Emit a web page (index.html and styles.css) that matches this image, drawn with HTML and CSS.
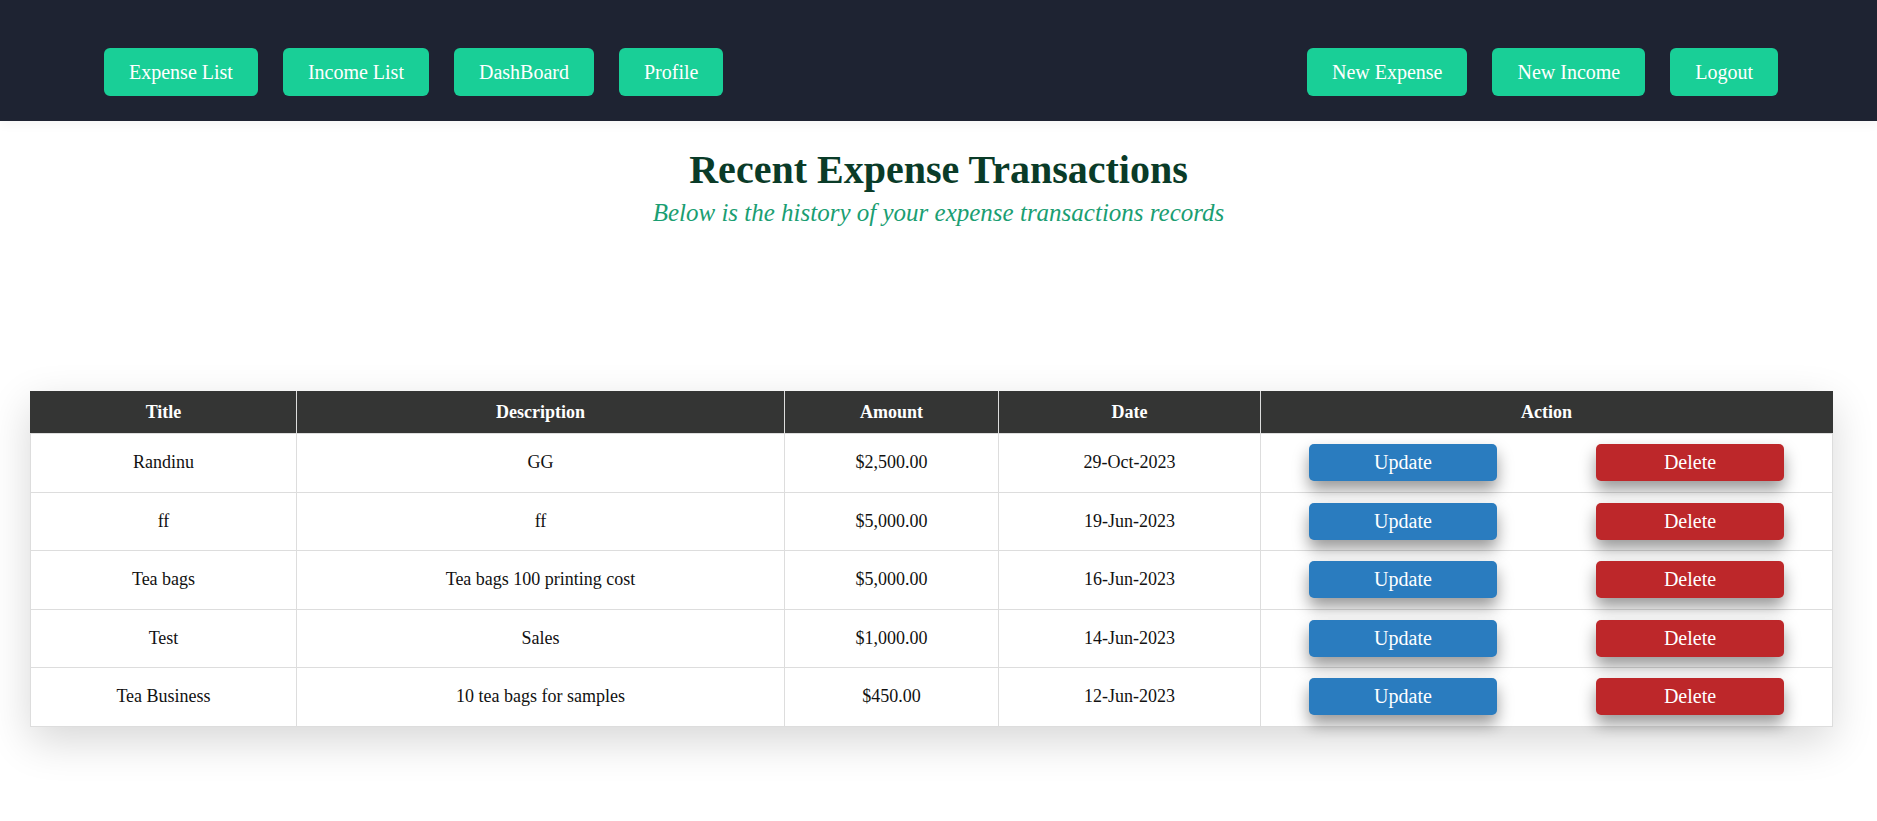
FILE: index.html
```html
<!DOCTYPE html>
<html>
<head>
<meta charset="utf-8">
<link rel="stylesheet" href="styles.css">
</head>
<body>
<nav class="nav">
  <div class="nav-group">
    <a class="nav-btn">Expense List</a>
    <a class="nav-btn">Income List</a>
    <a class="nav-btn">DashBoard</a>
    <a class="nav-btn">Profile</a>
  </div>
  <div class="nav-group">
    <a class="nav-btn">New Expense</a>
    <a class="nav-btn">New Income</a>
    <a class="nav-btn">Logout</a>
  </div>
</nav>
<header class="page-head">
  <h1 class="title">Recent Expense Transactions</h1>
  <p class="subtitle">Below is the history of your expense transactions records</p>
</header>
<section class="table-wrap">
  <table class="tx-table">
    <colgroup>
      <col class="c-title"><col class="c-desc"><col class="c-amount"><col class="c-date"><col class="c-action">
    </colgroup>
    <thead>
      <tr><th>Title</th><th>Description</th><th>Amount</th><th>Date</th><th>Action</th></tr>
    </thead>
    <tbody>
      <tr><td>Randinu</td><td>GG</td><td>$2,500.00</td><td>29-Oct-2023</td><td><div class="actions"><button class="btn btn-update">Update</button><button class="btn btn-delete">Delete</button></div></td></tr>
      <tr><td>ff</td><td>ff</td><td>$5,000.00</td><td>19-Jun-2023</td><td><div class="actions"><button class="btn btn-update">Update</button><button class="btn btn-delete">Delete</button></div></td></tr>
      <tr><td>Tea bags</td><td>Tea bags 100 printing cost</td><td>$5,000.00</td><td>16-Jun-2023</td><td><div class="actions"><button class="btn btn-update">Update</button><button class="btn btn-delete">Delete</button></div></td></tr>
      <tr><td>Test</td><td>Sales</td><td>$1,000.00</td><td>14-Jun-2023</td><td><div class="actions"><button class="btn btn-update">Update</button><button class="btn btn-delete">Delete</button></div></td></tr>
      <tr><td>Tea Business</td><td>10 tea bags for samples</td><td>$450.00</td><td>12-Jun-2023</td><td><div class="actions"><button class="btn btn-update">Update</button><button class="btn btn-delete">Delete</button></div></td></tr>
    </tbody>
  </table>
</section>
</body>
</html>
```

FILE: styles.css
```css
* { box-sizing: border-box; }
html, body { margin: 0; padding: 0; background: #ffffff; }
body { font-family: "Liberation Serif", "Times New Roman", serif; color: #111; min-height: 821px; }

.nav {
  height: 121px;
  background: #1e2332;
  display: flex;
  justify-content: space-between;
  align-items: flex-start;
  padding: 48px 99px 0 104px;
  box-shadow: 0 4px 10px rgba(0,0,0,0.04);
  position: relative;
}
.nav-group { display: flex; gap: 25px; }
.nav-btn {
  display: block;
  background: #19cf97;
  color: #ffffff;
  font-size: 20px;
  line-height: 24px;
  padding: 12px 25px;
  border-radius: 6px;
  white-space: nowrap;
}

.page-head { text-align: center; }
.title {
  margin: 26px 0 6px;
  font-size: 40px;
  line-height: 46px;
  font-weight: bold;
  color: #0a3b28;
}
.subtitle {
  margin: 0;
  font-size: 25px;
  line-height: 28px;
  font-style: italic;
  color: #1a9e72;
}

.table-wrap {
  margin: 164px 0 0 30px;
  width: 1802px;
  background: #ffffff;
  box-shadow: 0 14px 40px rgba(0,0,0,0.16);
}
.tx-table {
  width: 1802px;
  border-collapse: collapse;
  table-layout: fixed;
  font-size: 18px;
}
.c-title { width: 266px; }
.c-desc { width: 488px; }
.c-amount { width: 214px; }
.c-date { width: 262px; }
.c-action { width: 572px; }

.tx-table th {
  background: #343534;
  color: #ffffff;
  font-weight: bold;
  height: 42px;
  padding: 0 10px;
  line-height: 21px;
  border: 1px solid #dddddd;
  border-top-color: #343534;
}
.tx-table th:first-child { border-left-color: #343534; }
.tx-table th:last-child { border-right-color: #343534; }
.tx-table tbody tr { height: 58.5px; }
.tx-table td {
  text-align: center;
  padding: 0 10px;
  border: 1px solid #dddddd;
  color: #111;
}
.tx-table td:last-child { padding: 0 48px; }

.actions { display: flex; justify-content: space-between; }
.btn {
  width: 188px;
  height: 37px;
  border: none;
  border-radius: 5px;
  color: #ffffff;
  font-family: "Liberation Serif", "Times New Roman", serif;
  font-size: 20px;
  padding: 0;
  box-shadow: 0 9px 16px rgba(0,0,0,0.4);
}
.btn-update { background: #2a7cbf; }
.btn-delete { background: #bd272a; }
```
